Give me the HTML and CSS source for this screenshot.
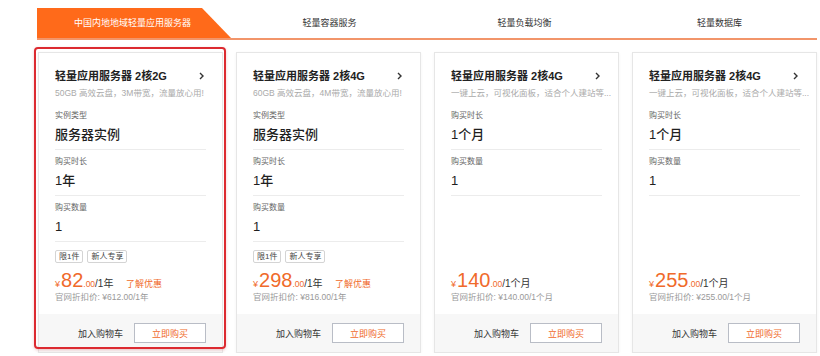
FILE: index.html
```html
<!DOCTYPE html>
<html lang="zh-CN">
<head>
    <meta charset="UTF-8">
    <meta name="viewport" content="width=device-width, initial-scale=1.0">
    <title>轻量应用服务器</title>
    <link rel="stylesheet" href="styles.css">
</head>
<body>
    <div class="tabs">
        <div class="tab active">中国内地地域轻量应用服务器</div>
        <div class="tab">轻量容器服务</div>
        <div class="tab">轻量负载均衡</div>
        <div class="tab">轻量数据库</div>
    </div>

    <div class="cards">
        <div class="card selected">
            <div class="card-body">
                <div class="card-title">
                    <span>轻量应用服务器 2核2G</span>
                    <svg class="chevron" width="5" height="8" viewBox="0 0 5 8"><path d="M1 1l3 3-3 3" fill="none" stroke="#333" stroke-width="1.4"/></svg>
                </div>
                <div class="card-desc">50GB 高效云盘，3M带宽，流量放心用!</div>
                <div class="row">
                    <div class="label">实例类型</div>
                    <div class="value">服务器实例</div>
                </div>
                <div class="row">
                    <div class="label">购买时长</div>
                    <div class="value">1年</div>
                </div>
                <div class="row">
                    <div class="label">购买数量</div>
                    <div class="value">1</div>
                </div>
                <div class="price-box">
                    <div class="tags">
                        <span class="tag">限1件</span>
                        <span class="tag">新人专享</span>
                    </div>
                    <div class="price">
                        <span class="yen">¥</span><span class="num">82</span><span class="dec">.00</span><span class="unit">/1年</span>
                        <a class="promo">了解优惠</a>
                    </div>
                    <div class="orig">官网折扣价: ¥612.00/1年</div>
                </div>
            </div>
            <div class="card-foot">
                <span class="cart">加入购物车</span>
                <button class="buy">立即购买</button>
            </div>
            <div class="mark"></div>
        </div>

        <div class="card">
            <div class="card-body">
                <div class="card-title">
                    <span>轻量应用服务器 2核4G</span>
                    <svg class="chevron" width="5" height="8" viewBox="0 0 5 8"><path d="M1 1l3 3-3 3" fill="none" stroke="#333" stroke-width="1.4"/></svg>
                </div>
                <div class="card-desc">60GB 高效云盘，4M带宽，流量放心用!</div>
                <div class="row">
                    <div class="label">实例类型</div>
                    <div class="value">服务器实例</div>
                </div>
                <div class="row">
                    <div class="label">购买时长</div>
                    <div class="value">1年</div>
                </div>
                <div class="row">
                    <div class="label">购买数量</div>
                    <div class="value">1</div>
                </div>
                <div class="price-box">
                    <div class="tags">
                        <span class="tag">限1件</span>
                        <span class="tag">新人专享</span>
                    </div>
                    <div class="price">
                        <span class="yen">¥</span><span class="num">298</span><span class="dec">.00</span><span class="unit">/1年</span>
                        <a class="promo">了解优惠</a>
                    </div>
                    <div class="orig">官网折扣价: ¥816.00/1年</div>
                </div>
            </div>
            <div class="card-foot">
                <span class="cart">加入购物车</span>
                <button class="buy">立即购买</button>
            </div>
        </div>

        <div class="card">
            <div class="card-body">
                <div class="card-title">
                    <span>轻量应用服务器 2核4G</span>
                    <svg class="chevron" width="5" height="8" viewBox="0 0 5 8"><path d="M1 1l3 3-3 3" fill="none" stroke="#333" stroke-width="1.4"/></svg>
                </div>
                <div class="card-desc">一键上云，可视化面板，适合个人建站等...</div>
                <div class="row">
                    <div class="label">购买时长</div>
                    <div class="value">1个月</div>
                </div>
                <div class="row">
                    <div class="label">购买数量</div>
                    <div class="value">1</div>
                </div>
                <div class="price-box">
                    <div class="price">
                        <span class="yen">¥</span><span class="num">140</span><span class="dec">.00</span><span class="unit">/1个月</span>
                    </div>
                    <div class="orig">官网折扣价: ¥140.00/1个月</div>
                </div>
            </div>
            <div class="card-foot">
                <span class="cart">加入购物车</span>
                <button class="buy">立即购买</button>
            </div>
        </div>

        <div class="card">
            <div class="card-body">
                <div class="card-title">
                    <span>轻量应用服务器 2核4G</span>
                    <svg class="chevron" width="5" height="8" viewBox="0 0 5 8"><path d="M1 1l3 3-3 3" fill="none" stroke="#333" stroke-width="1.4"/></svg>
                </div>
                <div class="card-desc">一键上云，可视化面板，适合个人建站等...</div>
                <div class="row">
                    <div class="label">购买时长</div>
                    <div class="value">1个月</div>
                </div>
                <div class="row">
                    <div class="label">购买数量</div>
                    <div class="value">1</div>
                </div>
                <div class="price-box">
                    <div class="price">
                        <span class="yen">¥</span><span class="num">255</span><span class="dec">.00</span><span class="unit">/1个月</span>
                    </div>
                    <div class="orig">官网折扣价: ¥255.00/1个月</div>
                </div>
            </div>
            <div class="card-foot">
                <span class="cart">加入购物车</span>
                <button class="buy">立即购买</button>
            </div>
        </div>
    </div>
</body>
</html>
```

FILE: styles.css
```css
body {
    margin: 0;
    background-color: #fff;
    font-family: 'Liberation Sans', 'Noto Sans CJK SC', sans-serif;
    color: #333;
}

.tabs {
    display: flex;
    width: 780px;
    margin: 8px 0 0 37px;
    border-bottom: 2px solid #f2956a;
}

.tab {
    flex: 1;
    height: 30px;
    line-height: 30px;
    text-align: center;
    font-size: 9px;
    color: #333;
}

.tab.active {
    background-color: #ff6a1a;
    color: #fff;
    clip-path: polygon(0 0, 165px 0, 194px 100%, 0 100%);
    text-indent: -4px;
}

.cards {
    display: flex;
    gap: 13px;
    margin: 12px 0 0 38px;
}

.card {
    position: relative;
    width: 185px;
    height: 301px;
    box-sizing: border-box;
    border: 1px solid #e6e6e6;
    box-shadow: 0 1px 3px rgba(0, 0, 0, 0.05);
    display: flex;
    flex-direction: column;
    background-color: #fff;
}

.card-body {
    flex: 1;
    display: flex;
    flex-direction: column;
    padding: 13px 16px 11px;
}

.card-title {
    display: flex;
    justify-content: space-between;
    align-items: center;
    line-height: 20px;
    font-size: 11px;
    font-weight: bold;
    color: #222;
}

.chevron {
    margin-right: 2px;
}

.card-desc {
    line-height: 14px;
    font-size: 8.5px;
    color: #aaa;
    white-space: nowrap;
    margin-bottom: 4px;
}

.row {
    padding: 5px 0 3px;
    border-bottom: 1px solid #ececec;
}

.label {
    line-height: 14px;
    font-size: 8px;
    color: #666;
}

.value {
    margin-top: 1px;
    line-height: 22px;
    font-size: 13px;
    font-weight: 500;
    color: #1f1f1f;
}

.price-box {
    margin-top: auto;
}

.tags {
    display: flex;
    gap: 4px;
    margin-bottom: 6px;
}

.tag {
    height: 13px;
    line-height: 11px;
    box-sizing: border-box;
    padding: 0 3px;
    border: 1px solid #d4d4d4;
    border-radius: 2px;
    font-size: 8px;
    color: #444;
}

.price {
    line-height: 22px;
    height: 22px;
    color: #f06a2b;
    white-space: nowrap;
}

.yen {
    font-size: 9px;
    margin-right: 1px;
}

.num {
    font-size: 20px;
}

.dec {
    font-size: 8.5px;
}

.unit {
    font-size: 10px;
    color: #333;
}

.promo {
    margin-left: 8px;
    font-size: 9px;
    color: #f06a2b;
}

.orig {
    line-height: 12px;
    font-size: 8.5px;
    color: #999;
}

.card-foot {
    height: 38px;
    display: flex;
    justify-content: flex-end;
    align-items: center;
    gap: 11px;
    padding-right: 16px;
    background-color: #f7f7f7;
}

.cart {
    font-size: 9px;
    color: #333;
}

.buy {
    width: 72px;
    height: 20px;
    padding: 0;
    border: 1px solid #b9bdc6;
    background-color: #fff;
    font-family: inherit;
    font-size: 9px;
    color: #f06a2b;
}

.mark {
    position: absolute;
    left: -5px;
    right: -4px;
    top: -6px;
    bottom: 3px;
    border: 2px solid #dc2a30;
    border-radius: 4px;
    box-shadow: 0 1px 3px rgba(200, 30, 40, 0.25);
    pointer-events: none;
}
```
